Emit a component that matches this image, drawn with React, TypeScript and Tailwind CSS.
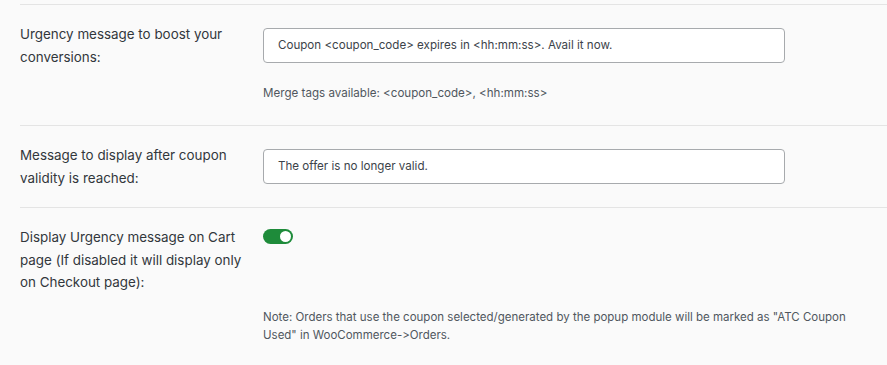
const fieldText = 'text-[11.6px] text-[#3c434a]';

function Row({
  label,
  children,
  last = false
}: {
  label: string;
  children: React.ReactNode;
  last?: boolean;
}) {
  return (
    <div className={last ? 'flex pt-[18px]' : 'flex border-b border-[#e4e4e4] py-[18px]'}>
      <div className="w-[243px] shrink-0 pr-[16px] text-[13.4px] leading-[22.5px] text-[#32373c]">{label}</div>
      <div className="w-[522px] py-[5px]">{children}</div>
    </div>
  );
}

export default function App() {
  return (
    <div className="h-[365px] w-[887px] overflow-hidden bg-[#fafafa] font-['Inter',sans-serif] [font-feature-settings:'calt'_0]">
      <div className="ml-5 mt-1 border-t border-[#e4e4e4]">
        <Row label="Urgency message to boost your conversions:">
          <div
            className={`flex h-[35px] items-center rounded-[4px] border border-[#a7aaad] bg-white px-[14px] ${fieldText}`}
          >
            Coupon &lt;coupon_code&gt; expires in &lt;hh:mm:ss&gt;. Avail it now.
          </div>
          <p className="mt-[21px] text-[11.6px] leading-[18px] text-[#50575e]">
            Merge tags available: &lt;coupon_code&gt;, &lt;hh:mm:ss&gt;
          </p>
        </Row>
        <Row label="Message to display after coupon validity is reached:">
          <div
            className={`flex h-[35px] items-center rounded-[4px] border border-[#a7aaad] bg-white px-[14px] ${fieldText}`}
          >
            The offer is no longer valid.
          </div>
        </Row>
        <Row label="Display Urgency message on Cart page (If disabled it will display only on Checkout page):" last>
          <div className="-mt-[2px] flex h-[15px] w-[30px] items-center justify-end rounded-full bg-[#1e8b3a] pr-[2px]">
            <div className="h-[11px] w-[11px] rounded-full bg-white" />
          </div>
          <p className="mt-[65px] w-[610px] text-[11.5px] leading-[17.5px] text-[#50575e]">
            Note: Orders that use the coupon selected/generated by the popup module will be marked as "ATC Coupon
            Used" in WooCommerce-&gt;Orders.
          </p>
        </Row>
      </div>
    </div>
  );
}
